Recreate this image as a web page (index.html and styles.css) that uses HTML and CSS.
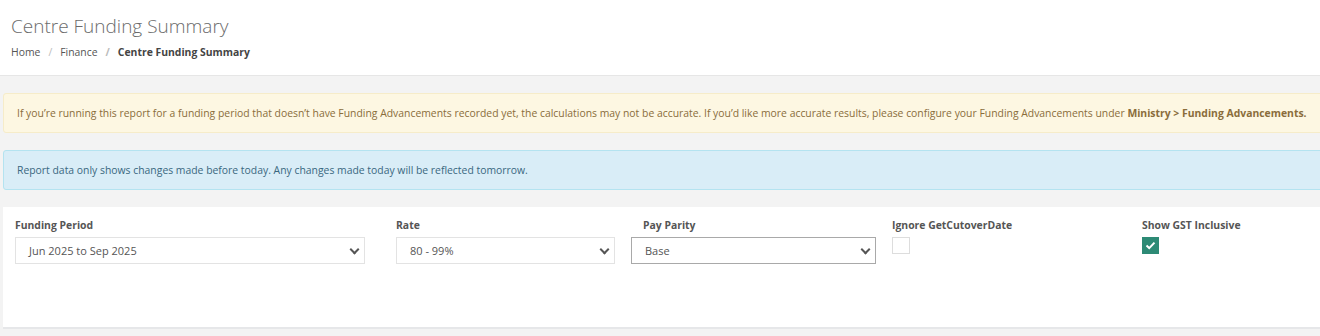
FILE: index.html
```html
<!DOCTYPE html>
<html lang="en">
<head>
  <meta charset="UTF-8" />
  <title>Centre Funding Summary</title>
  <link rel="stylesheet" href="styles.css">
</head>
<body>
  <div class="page-header">
    <h1>Centre Funding Summary</h1>
    <ul class="breadcrumb">
      <li><a href="#">Home</a></li>
      <li><a href="#">Finance</a></li>
      <li class="active">Centre Funding Summary</li>
    </ul>
  </div>

  <div class="content">
    <div class="alert alert-warning">
      If you’re running this report for a funding period that doesn’t have Funding Advancements recorded yet, the calculations may not be accurate. If you’d like more accurate results, please configure your Funding Advancements under <b>Ministry &gt; Funding Advancements.</b>
    </div>

    <div class="alert alert-info">
      Report data only shows changes made before today. Any changes made today will be reflected tomorrow.
    </div>

    <div class="panel">
      <div class="filters">
        <div class="field">
          <label>Funding Period</label>
          <div class="select w-period">Jun 2025 to Sep 2025</div>
        </div>
        <div class="field">
          <label>Rate</label>
          <div class="select w-rate">80 - 99%</div>
        </div>
        <div class="field">
          <label class="indent">Pay Parity</label>
          <div class="select w-parity focused">Base</div>
        </div>
        <div class="field">
          <label>Ignore GetCutoverDate</label>
          <span class="check"></span>
        </div>
        <div class="field">
          <label>Show GST Inclusive</label>
          <span class="check checked">
            <svg width="11" height="9" viewBox="0 0 11 9"><path d="M1.5 4.6 L4.2 7.1 L9.5 1.6" fill="none" stroke="#fff" stroke-width="2"/></svg>
          </span>
        </div>
      </div>
    </div>
  </div>
</body>
</html>
```

FILE: styles.css
```css
body {
  margin: 0;
  font-family: 'Open Sans', sans-serif;
  background: #f3f3f3;
  color: #555;
  overflow: hidden;
}

.page-header {
  background: #fff;
  height: 76px;
  padding: 12px 11px 0;
  box-sizing: border-box;
  border-bottom: 1px solid #e6e6e6;
}

.page-header h1 {
  margin: 0;
  font-size: 19px;
  font-weight: 300;
  color: #6b6b6b;
  line-height: 28px;
}

.breadcrumb {
  list-style: none;
  margin: 5px 0 0;
  padding: 0;
  display: flex;
  font-size: 10.4px;
  line-height: 14px;
}

.breadcrumb li + li::before {
  content: "/";
  color: #bbb;
  padding: 0 8px 0 8px;
}

.breadcrumb a {
  color: #555;
  text-decoration: none;
}

.breadcrumb .active {
  font-weight: 700;
  color: #444;
}

.content {
  padding: 17px 0 0 3px;
  margin-right: -20px;
}

.alert {
  font-size: 10.4px;
  line-height: 14px;
  padding: 12px 13px;
  border: 1px solid;
  border-radius: 3px;
  margin-bottom: 17px;
}

.alert-warning {
  background: #fdf7e2;
  border-color: #f6ecc9;
  color: #8a6d3b;
}

.alert-info {
  background: #d9edf7;
  border-color: #b4e3f0;
  color: #3a6880;
}

.alert b {
  font-weight: 700;
}

.panel {
  background: #fff;
  height: 120px;
  border-bottom: 2px solid #e6e7e9;
}

.filters {
  display: grid;
  grid-template-columns: 381px 235px 261px 250px auto;
  padding: 11px 0 0 12px;
}

.field label {
  display: block;
  font-size: 10.4px;
  font-weight: 700;
  color: #555;
  line-height: 14px;
  margin-bottom: 5px;
}

.field label.indent {
  padding-left: 12px;
}

.select {
  height: 27px;
  box-sizing: border-box;
  border: 1px solid #e3e3e3;
  padding: 0 13px;
  font-size: 11px;
  line-height: 25px;
  color: #555;
  position: relative;
}

.select::after {
  content: "";
  position: absolute;
  right: 6px;
  top: 8px;
  width: 5px;
  height: 5px;
  border-right: 2px solid #555;
  border-bottom: 2px solid #555;
  transform: rotate(45deg);
}

.select.focused {
  border-color: #a9a9a9;
}

.w-period { width: 350px; }
.w-rate { width: 219px; }
.w-parity { width: 245px; }

.check {
  display: flex;
  align-items: center;
  justify-content: center;
  width: 18px;
  height: 17px;
  box-sizing: border-box;
  border: 1px solid #ddd;
  background: #fff;
}

.check.checked {
  width: 17px;
  background: #2d8a75;
  border-color: #2d8a75;
}
```
